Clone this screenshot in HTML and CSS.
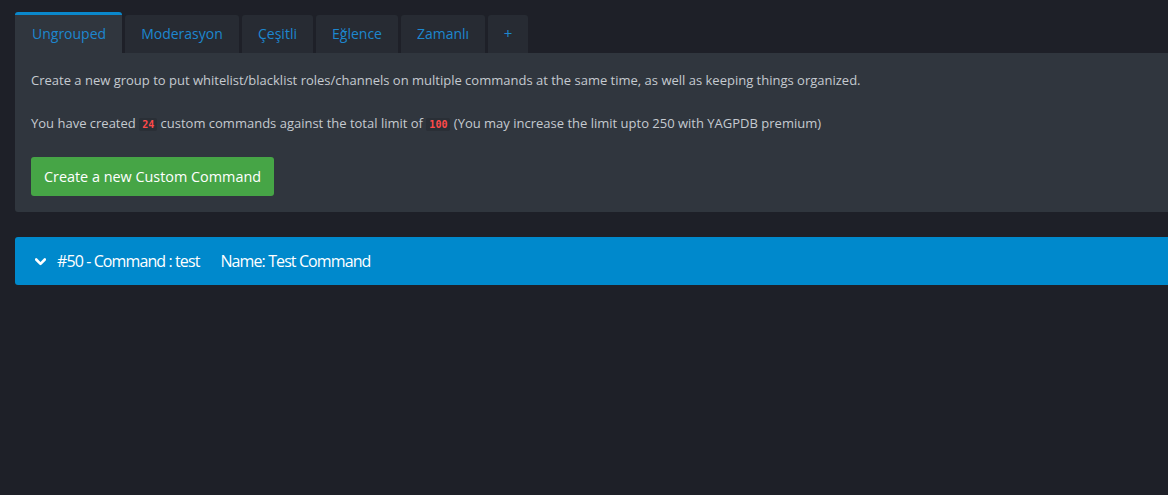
FILE: index.html
```html
<!DOCTYPE html>
<html>
<head>
<meta charset="utf-8">
<link rel="stylesheet" href="styles.css">
</head>
<body>
<div class="page">
  <ul class="tabs">
    <li class="tab active">Ungrouped</li>
    <li class="tab">Moderasyon</li>
    <li class="tab">Çeşitli</li>
    <li class="tab">Eğlence</li>
    <li class="tab">Zamanlı</li>
    <li class="tab plus">+</li>
  </ul>
  <div class="panel">
    <p>Create a new group to put whitelist/blacklist roles/channels on multiple commands at the same time, as well as keeping things organized.</p>
    <p>You have created <code>24</code> custom commands against the total limit of <code>100</code> (You may increase the limit upto 250 with YAGPDB premium)</p>
    <button class="btn">Create a new Custom Command</button>
  </div>
  <div class="cmd">
    <svg class="chev" width="11" height="8" viewBox="0 0 11 8"><path d="M1.2 1.5 L5.5 5.8 L9.8 1.5" fill="none" stroke="#fff" stroke-width="2.6" stroke-linecap="round" stroke-linejoin="round"/></svg>
    <span class="cmd-id">#50 - Command : test</span>
    <span class="cmd-name">Name: Test Command</span>
  </div>
</div>
</body>
</html>
```
FILE: styles.css
```css
html, body {
  margin: 0;
  padding: 0;
  background: #1e2028;
  overflow: hidden;
}
body {
  font-family: "Open Sans", "Noto Sans", sans-serif;
  color: #c5cad0;
}
.page {
  width: 1170px;
  padding: 12px 0 0 15px;
}
.tabs {
  display: flex;
  gap: 3px;
  list-style: none;
  margin: 0;
  padding: 0;
  align-items: flex-end;
  height: 41px;
}
.tab {
  height: 38px;
  box-sizing: border-box;
  padding: 0 16px 2px 16px;
  background: #272b33;
  color: #1d87cf;
  font-size: 14px;
  display: flex;
  align-items: center;
  border-radius: 3px 3px 0 0;
}
.tab.active {
  height: 41px;
  padding: 0 16px 2px 17px;
  background: #30363e;
  border-top: 3px solid #0a88cc;
  width: 107px;
}
.tab:nth-child(2) { width: 114px; justify-content: center; }
.tab:nth-child(3) { width: 71px; justify-content: center; }
.tab:nth-child(4) { width: 82px; justify-content: center; }
.tab:nth-child(5) { width: 84px; justify-content: center; }
.tab:nth-child(6) { width: 40px; justify-content: center; }
.tab.plus { font-size: 15px; }
.panel {
  background: #30363e;
  padding: 18px 16px 16px 16px;
  border-radius: 0 0 3px 3px;
}
.panel p {
  margin: 0 0 24px 0;
  font-size: 13px;
  line-height: 19px;
}
.panel p + p {
  margin-bottom: 23px;
}
code {
  font-family: "DejaVu Sans Mono", "Liberation Mono", monospace;
  font-size: 10px;
  font-weight: bold;
  color: #ff4a4a;
  background: #2a2f36;
  padding: 1px 3px;
  border-radius: 2px;
}
.btn {
  display: block;
  background: #46a546;
  color: #fff;
  border: 0;
  border-radius: 3px;
  height: 39px;
  padding: 0 12px;
  width: 243px;
  font-family: "Open Sans", "Noto Sans", sans-serif;
  font-size: 14.4px;
}
.cmd {
  margin-top: 25px;
  height: 48px;
  background: #0089cc;
  border-radius: 3px 0 0 3px;
  display: flex;
  align-items: center;
  padding-left: 20px;
  color: #fff;
  font-size: 16px;
  letter-spacing: -0.9px;
}
.chev {
  margin-right: 11px;
  margin-top: 1px;
}
.cmd-name {
  margin-left: 21px;
}
```
